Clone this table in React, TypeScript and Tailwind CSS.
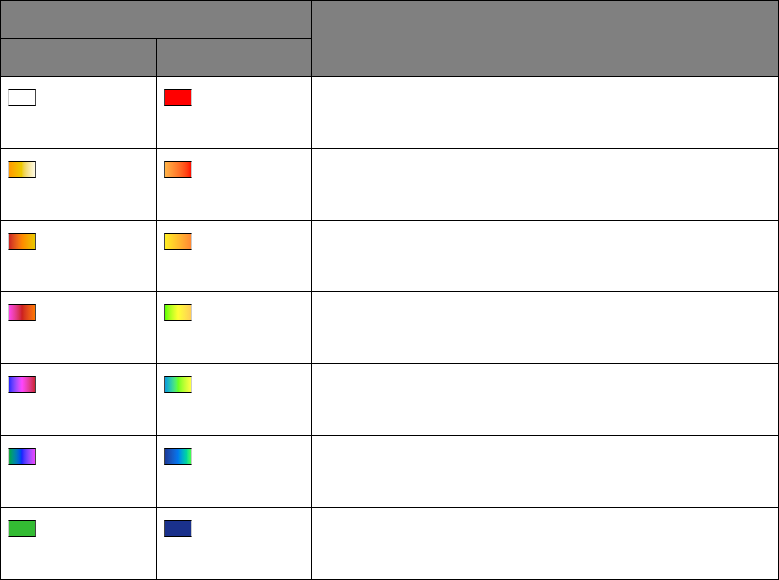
const rows: [string, string][] = [
    ['bg-white', 'bg-[#ff0000]'],
    ['bg-gradient-to-r from-[#ff9900] via-[#eecc00] to-[#fffbe6]', 'bg-gradient-to-r from-[#ffb347] to-[#ff0000]'],
    ['bg-gradient-to-r from-[#cc2222] via-[#ff8800] to-[#e8c800]', 'bg-gradient-to-r from-[#ffee22] to-[#ff8833]'],
    ['bg-gradient-to-r from-[#ff44ee] via-[#cc1f1f] to-[#ff7700]', 'bg-gradient-to-r from-[#55ff00] via-[#ffff33] to-[#ffcc55]'],
    ['bg-gradient-to-r from-[#2222ff] via-[#ff44ff] to-[#cc2233]', 'bg-gradient-to-r from-[#1199dd] via-[#66ff22] to-[#ffff44]'],
    ['bg-gradient-to-r from-[#22aa33] via-[#1a22ff] to-[#ee44ff]', 'bg-gradient-to-r from-[#1a3a99] via-[#0077ee] to-[#44ff44]'],
    ['bg-[#33bb33]', 'bg-[#1a318c]'],
]

const Swatch = ({ fill, flip }: { fill: string, flip?: boolean }) => (
    <div className={`w-[28px] h-[17px] border border-t-black border-b-black ${flip ? 'border-l-[#444] border-r-[#ccc]' : 'border-l-[#ccc] border-r-[#444]'} ${fill}`} />
)

export default function App() {
    return (
        <div className="w-[779px] h-[580px] bg-white overflow-hidden">
            <table className="w-[779px] border-collapse table-fixed">
                <colgroup>
                    <col className="w-[156px]" />
                    <col className="w-[155px]" />
                    <col />
                </colgroup>
                <thead>
                    <tr className="h-[38px]">
                        <th colSpan={2} className="border border-black bg-[#808080] p-0"></th>
                        <th rowSpan={2} className="border border-black bg-[#808080] p-0"></th>
                    </tr>
                    <tr className="h-[38px]">
                        <th className="border border-black bg-[#808080] p-0"></th>
                        <th className="border border-black bg-[#808080] p-0"></th>
                    </tr>
                </thead>
                <tbody>
                    {rows.map(([a, b], i) => (
                        <tr key={i} className={i === 2 ? 'h-[71px]' : 'h-[72px]'}>
                            <td className="border border-black align-top pt-[12px] pl-[7px]">
                                <Swatch fill={a} />
                            </td>
                            <td className="border border-black align-top pt-[12px] pl-[7px]">
                                <Swatch fill={b} flip />
                            </td>
                            <td className="border border-black"></td>
                        </tr>
                    ))}
                </tbody>
            </table>
        </div>
    )
}
